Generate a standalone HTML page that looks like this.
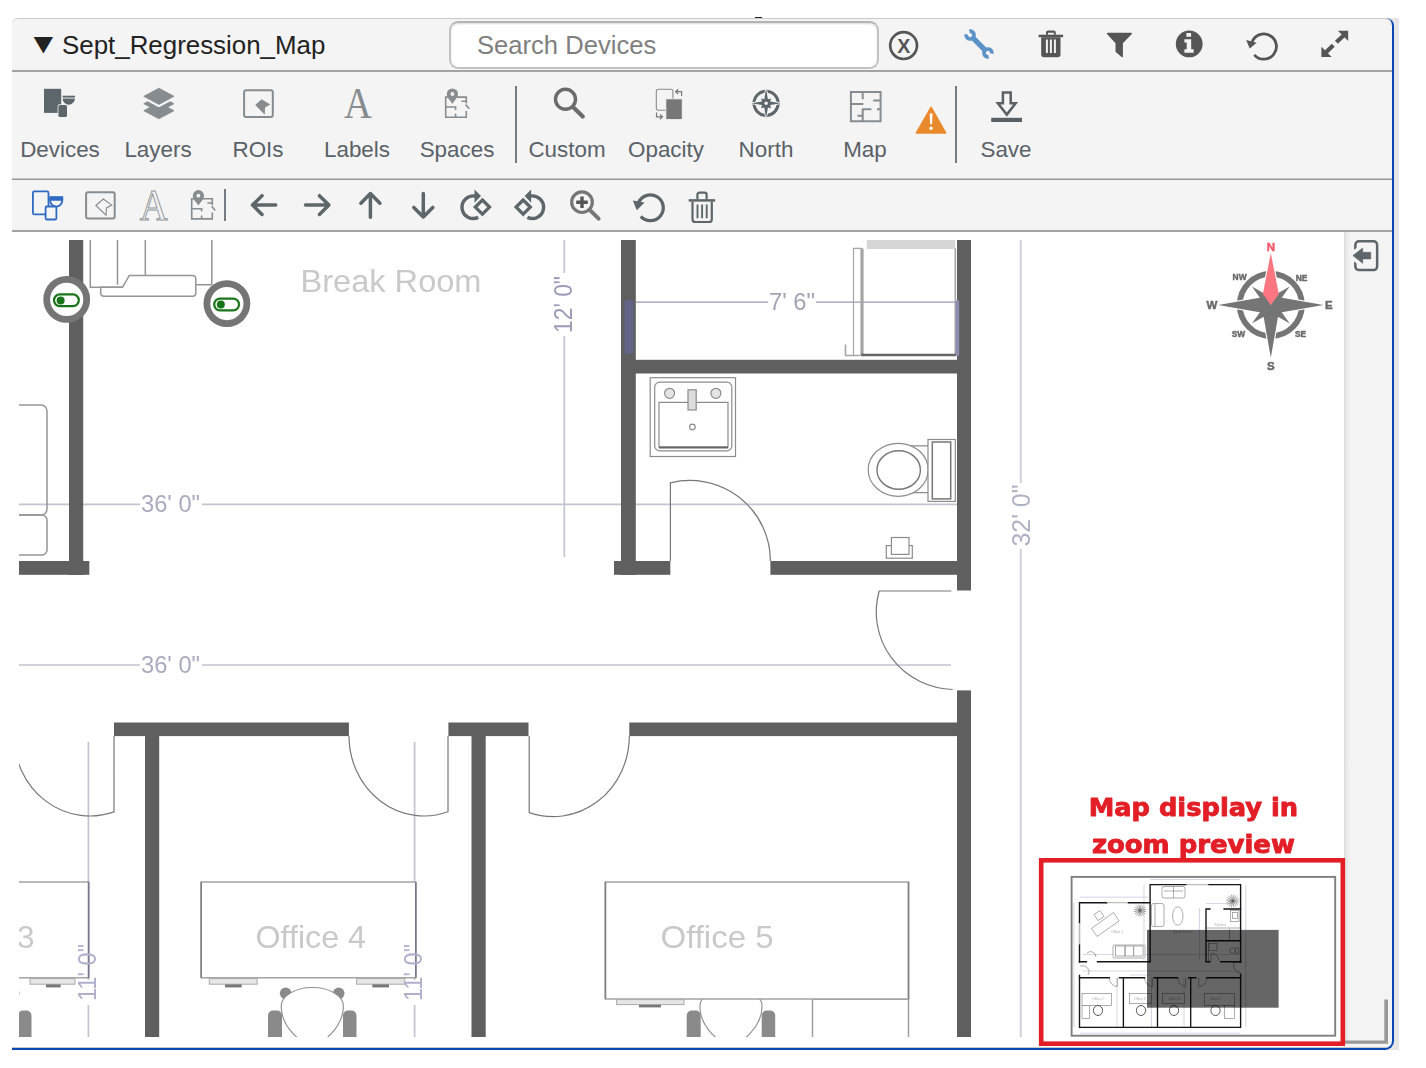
<!DOCTYPE html>
<html lang="en">
<head>
<meta charset="utf-8">
<title>Sept_Regression_Map</title>
<style>
html,body{margin:0;padding:0;background:#fff;}
body{width:1426px;height:1068px;position:relative;overflow:hidden;font-family:"Liberation Sans",Arial,sans-serif;}
.abs{position:absolute;}
#panel{left:12px;top:18px;width:1380px;height:1030px;background:#f4f4f4;border-top:1px solid #c9c9c9;box-sizing:border-box;border-radius:6px 8px 0 0;}
#stripe{left:1384px;top:18px;width:15px;height:1032px;background:#e6e6e6;}
#blueR{left:1384px;top:18px;width:10px;height:1032px;box-sizing:border-box;border-right:2px solid #0a47b3;border-bottom:2px solid #0a47b3;border-radius:0 8px 9px 0;}
#blueB{left:12px;top:1047px;width:1374px;height:3px;box-sizing:border-box;border-top:1px solid #c8c8c8;background:#0a47b3;}
.sep{left:12px;width:1380px;height:2px;background:#a3a3a3;}
#title{left:33px;top:29px;font-size:25.9px;line-height:32px;color:#222;white-space:nowrap;}
#tri{display:inline-block;width:29px;font-size:28px;line-height:30px;vertical-align:top;transform:translateX(-6px) scaleX(1.18);transform-origin:left center;}
#search{left:449px;top:21px;width:430px;height:48px;box-sizing:border-box;border:2px solid #c2c2c2;border-top-color:#b4b4b4;border-radius:9px;background:#fff;box-shadow:inset 0 1px 2px rgba(0,0,0,.14);}
#search span{position:absolute;left:26px;top:6px;font-size:25.6px;line-height:32px;color:#7f7f7f;white-space:nowrap;}
.lbl{top:137px;font-size:22.4px;line-height:26px;color:#5a6268;white-space:nowrap;text-align:center;transform:translateX(-50%);}
.vsep{width:2px;background:#777b7f;}
#mapbg{left:12px;top:232px;width:1332px;height:815px;background:#fff;}
#side{left:1344px;top:232px;width:48px;height:809px;background:linear-gradient(to right,#dadada 0,#e6e6e6 2px,#f0f0f0 5px,#f4f4f4 8px);}
</style>
</head>
<body>
<div id="stripe" class="abs"></div>
<div id="panel" class="abs"></div>
<div id="mapbg" class="abs"></div>
<div id="side" class="abs"></div>
<div id="blueB" class="abs"></div>
<div id="blueR" class="abs"></div>

<div class="abs" style="left:755px;top:17px;width:7px;height:1px;background:#222"></div>
<!-- header -->
<div id="title" class="abs"><span id="tri">&#9660;</span>Sept_Regression_Map</div>
<div id="search" class="abs"><span>Search Devices</span></div>
<div class="abs sep" style="top:70px"></div>

<!-- toolbar 1 -->
<div class="abs lbl" style="left:60px">Devices</div>
<div class="abs lbl" style="left:158px">Layers</div>
<div class="abs lbl" style="left:258px">ROIs</div>
<div class="abs lbl" style="left:357px">Labels</div>
<div class="abs lbl" style="left:457px">Spaces</div>
<div class="abs lbl" style="left:567px">Custom</div>
<div class="abs lbl" style="left:666px">Opacity</div>
<div class="abs lbl" style="left:766px">North</div>
<div class="abs lbl" style="left:865px">Map</div>
<div class="abs lbl" style="left:1006px">Save</div>
<div class="abs vsep" style="left:515px;top:86px;height:77px"></div>
<div class="abs vsep" style="left:955px;top:86px;height:77px"></div>
<div class="abs sep" style="top:178px;background:linear-gradient(#c6c6c6 50%,#969696 50%)"></div>

<!-- toolbar 2 -->
<div class="abs vsep" style="left:224px;top:189px;height:32px"></div>
<div class="abs sep" style="top:230px"></div>

<!-- ICONS -->
<svg class="abs" style="left:0;top:0" width="1426" height="232" viewBox="0 0 1426 232">
<!-- header icons -->
<g fill="none" stroke="#555" stroke-width="2.7">
<circle cx="903.6" cy="45.6" r="13.4"/>
</g>
<text x="903.7" y="52.9" font-family="Liberation Sans, Arial, sans-serif" font-size="19.6" font-weight="bold" fill="#555" text-anchor="middle">X</text>
<!-- wrench -->
<g transform="translate(979 44) rotate(-45) scale(0.84)" fill="none" stroke="#5b92c8">
<path stroke-width="6.2" d="M0,-11.5 V11.5"/>
<path stroke-width="4.4" d="M2.7,-18.9 A4.7,4.7 0 1 1 -2.7,-18.9"/>
<path stroke-width="4.4" d="M-2.7,18.9 A4.7,4.7 0 1 1 2.7,18.9"/>
</g>
<!-- trash filled -->
<g fill="#555">
<path d="M1046,34.7 V32.6 a2.1,2.1 0 0 1 2.1,-2.1 h5.6 a2.1,2.1 0 0 1 2.1,2.1 V34.7 h-2 V32.7 h-5.8 V34.7 Z"/>
<rect x="1038.6" y="34.7" width="24.5" height="2.5"/>
<path fill-rule="evenodd" d="M1041.2,37.2 H1060.5 V54.5 a2.8,2.8 0 0 1 -2.8,2.8 H1044 a2.8,2.8 0 0 1 -2.8,-2.8 Z M1045.9,39.6 h2 v13.4 h-2 Z M1049.9,39.6 h2 v13.4 h-2 Z M1053.9,39.6 h2 v13.4 h-2 Z"/>
</g>
<!-- filter -->
<path fill="#555" d="M1107.6,32.7 H1131.2 a0.8,0.8 0 0 1 .6,1.3 L1122.9,43.3 V56.5 a0.8,0.8 0 0 1 -1.3,.6 L1115.5,51.8 V43.3 L1107,34 a0.8,0.8 0 0 1 .6,-1.3 Z"/>
<!-- info -->
<circle cx="1189.2" cy="43.9" r="13.4" fill="#555"/>
<path fill="#f4f4f4" d="M1186.4,33.1 h4.7 v3.7 h-4.7 Z M1184.4,39.3 h6.8 v10 h2.5 v3.4 h-9.3 v-3.4 h2.3 v-6.8 h-2.3 Z"/>
<!-- refresh -->
<g>
<path fill="none" stroke="#555" stroke-width="2.8" d="M1252.1,42.0 A12.6,12.6 0 1 1 1254.3,54.8"/>
<path fill="#555" d="M1246.2,40 L1256.7,42.8 L1249.7,48.6 Z"/>
</g>
<!-- expand -->
<g fill="#555" stroke="#555">
<path stroke="none" d="M1348.2,30.7 V40.9 L1337.9,30.7 Z"/>
<path stroke="none" d="M1321.4,57 V46.8 L1331.7,57 Z"/>
<path stroke-width="4.2" fill="none" d="M1343.6,35.4 L1336.4,42.3 M1326,52.3 L1333.3,45.3"/>
</g>

<!-- toolbar 1 icons -->
<!-- devices -->
<g fill="#5d666b">
<rect x="44" y="88.8" width="17.2" height="24.1"/>
<rect x="57.6" y="104.2" width="10.2" height="13.6" rx="2.2" fill="#f4f4f4"/>
<rect x="58.4" y="105" width="8.6" height="12" rx="1.6"/>
<path d="M62.6,95.7 H74.9 V97.6 H62.6 Z"/>
<path d="M62.6,98.4 H74.9 A6.15,6.3 0 0 1 62.6,98.4 Z"/>
</g>
<!-- layers -->
<g fill="#868c8f" stroke-linejoin="round">
<path d="M143.8,110.7 L158.9,102.5 L174,110.7 L158.9,118.8 Z" stroke="#868c8f" stroke-width="0.8"/>
<path d="M143.8,103.7 L158.9,95.5 L174,103.7 L158.9,111.8 Z" stroke="#868c8f" stroke-width="0.8"/>
<path d="M143.8,96.3 L158.9,88.2 L174,96.3 L158.9,104.4 Z" stroke="#f4f4f4" stroke-width="5.2"/>
<path d="M143.8,96.3 L158.9,88.2 L174,96.3 L158.9,104.4 Z" stroke="#868c8f" stroke-width="0.8"/>
</g>
<!-- ROIs -->
<rect x="244.1" y="90.2" width="28.7" height="26.8" rx="2" fill="none" stroke="#868c8f" stroke-width="2"/>
<path fill="#868c8f" d="M255.2,104.9 L261.6,99.3 L270.2,104.5 L265,107.5 L264.8,114.8 Z"/>
<!-- Labels A -->
<text x="0" y="118" transform="translate(357.9 0) scale(0.875 1)" font-family="Liberation Serif, Times New Roman, serif" font-size="44" fill="#868c8f" text-anchor="middle">A</text>
<!-- Spaces -->
<g id="spc" fill="none" stroke="#868c8f" stroke-width="1.6">
<path d="M445.7,96.3 V117.2 H466.3 V110.9 M445,97.1 H467 M466.3,96.3 V103.6 M465.6,104.6 L469.3,108.8 M461.4,101.3 H466.3 M445,107 H455.6 V109.9 M455.6,113.7 V117.9"/>
<path fill="#868c8f" stroke="none" fill-rule="evenodd" d="M452.4,88.4 a5.6,5.6 0 0 1 5.6,5.6 c0,3.6 -3.4,6.2 -5.6,9.9 c-2.2,-3.7 -5.6,-6.3 -5.6,-9.9 a5.6,5.6 0 0 1 5.6,-5.6 Z M452.4,92.1 a1.9,1.9 0 1 0 0,3.8 a1.9,1.9 0 1 0 0,-3.8 Z"/>
</g>
<!-- Custom magnifier -->
<g fill="none" stroke="#6b6b6b">
<circle cx="565.5" cy="99.3" r="10" stroke-width="3.4"/>
<path d="M573.2,107.2 L582.8,116.4" stroke-width="4.2" stroke-linecap="round"/>
</g>
<!-- Opacity -->
<g>
<rect x="656.3" y="89.3" width="16.6" height="21" rx="2.2" fill="none" stroke="#8a8a8a" stroke-width="1.1"/>
<rect x="665.9" y="98.9" width="16.3" height="20.6" fill="#777" stroke="#f4f4f4" stroke-width="0.8"/>
<path fill="none" stroke="#777" stroke-width="1.2" d="M678.2,89.3 L675.6,91.7 L678.2,94.1 M675.8,91.7 H681.6 V95.9"/>
<path fill="none" stroke="#777" stroke-width="1.2" d="M656.5,112.6 V116.8 H662.3 M659.9,114.4 L662.5,116.8 L659.9,119.2"/>
</g>
<!-- North -->
<g>
<circle cx="766.1" cy="103.3" r="12.1" fill="none" stroke="#5d666b" stroke-width="3"/>
<path fill="#f4f4f4" d="M766.1,86 L769.6,99.8 L783.4,103.3 L769.6,106.8 L766.1,120.6 L762.6,106.8 L748.8,103.3 L762.6,99.8 Z"/>
<path fill="#5d666b" d="M766.1,88.4 L767.9,99.2 L771,98.4 L770.2,101.5 L781,103.3 L770.2,105.1 L771,108.2 L767.9,107.4 L766.1,118.2 L764.3,107.4 L761.2,108.2 L762,105.1 L751.2,103.3 L762,101.5 L761.2,98.4 L764.3,99.2 Z"/>
<circle cx="766.1" cy="103.3" r="1.7" fill="#f4f4f4"/>
</g>
<!-- Map -->
<path fill="none" stroke="#868c8f" stroke-width="2" d="M850.9,91.9 H880.6 V121.2 H850.9 Z M862.7,91.9 V99.3 M873.2,100.5 H880.6 M850.9,103.9 H863.4 M862.7,109.3 H871.4 M877,109.3 H880.6 M862.7,108.5 V121.2 M857.5,115.8 H862.7"/>
<!-- warning -->
<path fill="#e8892b" stroke="#e8892b" stroke-width="1.6" stroke-linejoin="round" d="M931.1,107.4 L945.6,132.9 H916.4 Z"/>
<path fill="#fff" d="M929.6,113.4 h3 l-0.6,10.8 h-1.8 Z"/>
<circle cx="931.1" cy="128.2" r="1.7" fill="#fff"/>
<!-- Save -->
<path fill="none" stroke="#5a6166" stroke-width="2.5" d="M1002.9,92.4 H1010.7 V103.3 H1015.6 L1006.8,114.6 L997.9,103.3 H1002.9 Z"/>
<rect x="991.2" y="117.8" width="30.8" height="4.2" fill="#5a6166"/>

<!-- toolbar 2 icons -->
<g fill="#f4f4f4" stroke="#2f6bc2" stroke-width="1.8">
<rect x="32.9" y="191.4" width="15.6" height="23" rx="1.5"/>
<path d="M50,199.8 H62.4 A6.2,6.8 0 0 1 50,199.8 Z"/><rect x="49.3" y="196.2" width="13.9" height="2.9" fill="#2f6bc2" stroke="none"/>
<rect x="45.6" y="206.5" width="10.8" height="13" rx="1.2"/>
</g>
<rect x="86.1" y="192.3" width="28.6" height="26.2" rx="2" fill="none" stroke="#868c8f" stroke-width="2"/>
<path fill="none" stroke="#868c8f" stroke-width="1.1" d="M95.9,205.5 L103.3,199 L111.8,205.1 L106.4,207.9 L106.1,215.2 Z"/>
<text x="0" y="220.1" transform="translate(153.6 0) scale(0.89 1)" font-family="Liberation Serif, Times New Roman, serif" font-size="43.5" fill="#f4f4f4" stroke="#8f9598" stroke-width="1" text-anchor="middle">A</text>
<use href="#spc" transform="translate(-254 101.7)"/>
<!-- arrows -->
<g fill="none" stroke="#5d666b" stroke-width="3.5" stroke-linecap="round" stroke-linejoin="round">
<path d="M275.7,205.1 H252.6 M262,195.7 L252.5,205.1 L262,214.5"/>
<path d="M305.5,205.1 H328.8 M319.4,195.7 L328.9,205.1 L319.4,214.5"/>
<path d="M370.4,217.2 V193.7 M360.9,203.2 L370.4,193.6 L379.9,203.2"/>
<path d="M423.3,193.4 V216.9 M413.8,207.4 L423.3,217 L432.8,207.4"/>
</g>
<!-- rotate right -->
<g fill="none" stroke="#5d666b">
<path stroke-width="3.4" d="M475.4,196.1 A11.3,11.3 0 1 0 478.2,217.4"/>
<path fill="#5d666b" stroke="none" d="M474.5,189.4 L481,196.1 L474.5,202.8 Z"/>
<path stroke-width="3.3" d="M482.4,200 L489.5,207.1 L482.4,214.2 L475.3,207.1 Z"/>
</g>
<g fill="none" stroke="#5d666b">
<path stroke-width="3.4" d="M530.2,196.1 A11.3,11.3 0 1 1 527.4,217.4"/>
<path fill="#5d666b" stroke="none" d="M531.1,189.4 L524.6,196.1 L531.1,202.8 Z"/>
<path stroke-width="3.3" d="M523.2,200 L516.1,207.1 L523.2,214.2 L530.3,207.1 Z"/>
</g>
<!-- zoom in -->
<g fill="none">
<circle cx="582" cy="202.2" r="10.3" stroke="#767676" stroke-width="3.2"/>
<path d="M590.2,210.4 L598.6,218.7" stroke="#767676" stroke-width="4" stroke-linecap="round"/>
<path d="M576.2,202.2 H587.8 M582,196.4 V208" stroke="#555" stroke-width="3.4"/>
</g>
<!-- refresh 2 -->
<path fill="none" stroke="#5d666b" stroke-width="3.3" d="M638.4,203 A12.9,12.9 0 1 1 640.8,216.4"/>
<path fill="#5d666b" d="M632.8,200.6 L644.6,202.6 L636.8,210.2 Z"/>
<!-- trash outline -->
<g fill="none" stroke="#5d666b" stroke-width="2.2">
<path d="M697.4,199.3 V194.6 a1.9,1.9 0 0 1 1.9,-1.9 h5.4 a1.9,1.9 0 0 1 1.9,1.9 V199.3"/>
<path d="M688.7,200.4 H715.2" stroke-width="2.5"/>
<path d="M692.5,201.6 V219.2 a2.8,2.8 0 0 0 2.8,2.8 H709 a2.8,2.8 0 0 0 2.8,-2.8 V201.6"/>
<path d="M697.5,204.4 V218.3 M702.1,204.4 V218.3 M706.7,204.4 V218.3" stroke-width="1.9"/>
</g>
</svg>

<!-- MAP -->
<svg class="abs" style="left:19px;top:240px" width="1325" height="797" viewBox="19 240 1325 797" font-family="Liberation Sans, Arial, sans-serif">
<defs><filter id="bl" x="-2%" y="-2%" width="104%" height="104%"><feGaussianBlur stdDeviation="0.7"/></filter></defs>
<g filter="url(#bl)">
<!-- dimension lines -->
<g stroke="#c4c4d0" stroke-width="1.7" fill="none">
<path d="M19,504.3 H140 M202,504.3 H957"/>
<path d="M19,665 H140 M202,665 H951"/>
<path d="M564.3,240 V273 M564.3,336 V557"/>
<path d="M1020.8,240 V483 M1020.8,549 V1037" stroke-width="2" stroke="#d0d0dc"/>
<path d="M88.4,742 V980 M88.4,1005 V1037 M414.6,742 V980 M414.6,1005 V1037"/>
</g>
<path d="M636,302.2 H768 M816,302.2 H957" stroke="#9a9ab4" stroke-width="1.3" fill="none"/>
<!-- sofa top-left -->
<g stroke="#959595" stroke-width="1.5" fill="none">
<path d="M90.3,240 V287.2 H122.6 M117.5,240 V284.7 M145.3,240 V275.5 M211.8,240 V284.7 H196"/>
<path fill="#fff" d="M100.7,287.2 V293 Q100.7,296.2 104,296.2 H192.5 Q195.8,296.2 195.8,293 V279 Q195.8,275.5 192.3,275.5 H129.3 L122.6,287.2 Z"/>
<!-- left furniture -->
<rect x="-10" y="405" width="57" height="110" rx="6"/>
<rect x="-10" y="515" width="57" height="40" rx="5"/>
</g>
<!-- fridge -->
<rect x="866.8" y="240" width="88.5" height="9" fill="#d6d6d6"/>
<g fill="none" stroke="#a5a5a5">
<path d="M853.5,355.5 V248.4 H862" stroke-width="1.2"/>
<path d="M845.5,344.5 V355.5 H860" stroke-width="1.6"/>
<path d="M862,248.4 V355.5" stroke-width="3.2"/>
<path d="M955.3,248.4 V355.5" stroke-width="1.6"/>
<path d="M861,355 H956" stroke="#666" stroke-width="2.4"/>
</g>
<!-- sink -->
<g fill="none" stroke="#8c8c8c" stroke-width="1.2">
<rect x="650.2" y="377.7" width="85.3" height="78.8"/>
<rect x="654.7" y="382.2" width="77.1" height="68.7" rx="5"/>
<path d="M688,402.4 H659 V447 H728 V402.4 H696.2"/>
<path d="M659,447.6 H728" stroke="#666" stroke-width="2"/>
<circle cx="669.6" cy="393.3" r="5" fill="#e4e4e4"/>
<circle cx="715.9" cy="393.3" r="5" fill="#e4e4e4"/>
<rect x="688" y="389.8" width="8.2" height="20.2" fill="#ddd"/>
<circle cx="692.4" cy="426.9" r="2.8"/>
</g>
<!-- toilet -->
<g fill="#fff" stroke="#8c8c8c" stroke-width="1.2">
<path d="M905,445.9 H928 M905,492.6 H928" fill="none"/>
<ellipse cx="898.2" cy="469.8" rx="30" ry="26.5"/>
<ellipse cx="898.7" cy="470" rx="21.7" ry="19.3" stroke="#777" stroke-width="1.4"/>
<rect x="928" y="439.5" width="27.3" height="61.9"/>
<rect x="932.3" y="442" width="18.4" height="56.9" stroke="#777" stroke-width="1.5"/>
<rect x="886.3" y="545.6" width="26" height="12.6"/>
<rect x="891.4" y="537.5" width="17.6" height="16.9"/>
</g>
<!-- doors -->
<g fill="none" stroke="#777" stroke-width="1.2">
<path d="M670.4,561 V482.9 A80.4,80.5 0 0 1 770.4,561"/>
<path d="M951.4,591 H879.2 A78.7,77.5 0 0 0 952.7,689.5"/>
<path d="M114,736 V811.9 A76,80 0 0 1 14,736"/>
<path d="M448,736 V811.8 A75,80 0 0 1 349,736"/>
<path d="M529.2,736 V812.6 A76.3,80.6 0 0 0 629.3,736"/>
</g>
<!-- chairs -->
<g id="chair">
<rect x="268" y="1010.5" width="14" height="40" rx="5" fill="#8a8a8a"/>
<rect x="343" y="1010.5" width="13.5" height="40" rx="5" fill="#8a8a8a"/>
<circle cx="285.6" cy="993.3" r="5.8" fill="#8a8a8a"/>
<circle cx="338.7" cy="993.3" r="5.8" fill="#8a8a8a"/>
<path d="M312.3,987.5 C330,987.5 343.4,996 343.4,1006 C343.4,1020 335,1032 322,1042 H302.6 C289,1032 281.2,1020 281.2,1006 C281.2,996 295,987.5 312.3,987.5 Z" fill="#fff" stroke="#8c8c8c" stroke-width="1.1"/>
</g>
<use href="#chair" x="418.7"/>
<use href="#chair" x="-325"/>
<!-- desks -->
<g fill="#fff" stroke="#9c9c9c" stroke-width="1.4">
<rect x="812.5" y="999" width="96" height="50"/>
<rect x="-60" y="882" width="148.6" height="95.8"/>
<rect x="201.2" y="882" width="214.6" height="95.8"/>
<rect x="605.4" y="882" width="303.1" height="117"/>
</g>
<path d="M88.6,882 V977.8 M415.8,882 V977.8" stroke="#77778f" stroke-width="1.6"/>
<path d="M201.2,882 V977.8 M605.4,882 V999 M908.5,882 V999" stroke="#808080" stroke-width="1.6"/>
<g fill="#e6e6e6" stroke="#aaa" stroke-width="1">
<rect x="30" y="978.6" width="45" height="5.6"/>
<rect x="209.3" y="978.6" width="47.8" height="5.6"/>
<rect x="356.6" y="978.6" width="48.2" height="5.6"/>
<rect x="616.6" y="999.6" width="67.4" height="5"/>
</g>
<g fill="#777">
<rect x="46" y="984.4" width="14.7" height="3"/>
<rect x="225" y="984.4" width="16.7" height="3"/>
<rect x="372.3" y="984.4" width="16.7" height="3"/>
<rect x="639" y="1004.8" width="22" height="2.6"/>
</g>
<!-- room labels -->
<g fill="#c9c9c9" font-size="31.5">
<text x="300.5" y="292" textLength="181" lengthAdjust="spacingAndGlyphs">Break Room</text>
<text x="255.5" y="948" textLength="110.5" lengthAdjust="spacingAndGlyphs">Office 4</text>
<text x="660.5" y="947.5" textLength="113" lengthAdjust="spacingAndGlyphs">Office 5</text>
<text x="34.5" y="948" text-anchor="end">Office 3</text>
</g>
<g fill="#ababc0" font-size="24">
<text x="141" y="512" textLength="59" lengthAdjust="spacingAndGlyphs">36' 0"</text>
<text x="141" y="673" textLength="59" lengthAdjust="spacingAndGlyphs">36' 0"</text>
<text x="769" y="310.3" fill="#a4a4b6" textLength="46" lengthAdjust="spacingAndGlyphs">7' 6"</text>
<text transform="translate(572 333) rotate(-90)" font-size="25.5" fill="#9c9cb8" textLength="57" lengthAdjust="spacingAndGlyphs">12' 0"</text>
<text transform="translate(1029.5 546.5) rotate(-90)" font-size="25.5" fill="#b0b0c4" textLength="62" lengthAdjust="spacingAndGlyphs">32' 0"</text>
<text transform="translate(96 1001) rotate(-90)" font-size="26" fill="#b0b0cc" textLength="57" lengthAdjust="spacingAndGlyphs">11' 0"</text>
<text transform="translate(422 1001) rotate(-90)" font-size="26" fill="#b0b0cc" textLength="57" lengthAdjust="spacingAndGlyphs">11' 0"</text>
</g>
<!-- walls -->
<g fill="#5e5e5e">
<rect x="69" y="240" width="14.2" height="335"/>
<rect x="19" y="561" width="70.3" height="13.8"/>
<rect x="621" y="240" width="14.8" height="335"/>
<rect x="614" y="561" width="56.3" height="13.8"/>
<rect x="635" y="359.8" width="336" height="13.7"/>
<rect x="770.4" y="561" width="200.6" height="13.8"/>
<rect x="957" y="240" width="14" height="350.5"/>
<rect x="957" y="690.4" width="14" height="347"/>
<rect x="114" y="722.5" width="234.9" height="13.6"/>
<rect x="145" y="735" width="14.2" height="303"/>
<rect x="448.4" y="722.5" width="80.1" height="13.6"/>
<rect x="471.5" y="735" width="14.2" height="303"/>
<rect x="629.3" y="722.5" width="328" height="13.6"/>
<rect x="624.5" y="300" width="9" height="54" rx="2" fill="#636388"/>
<rect x="955.8" y="300" width="3.4" height="56" rx="1.5" fill="#8c8cb2"/>
</g>
</g>
</svg>

<!-- OVERLAYS -->
<svg class="abs" style="left:0;top:232px" width="1426" height="836" viewBox="0 232 1426 836" font-family="Liberation Sans, Arial, sans-serif">
<!-- device markers -->
<g id="mk">
<circle cx="66.7" cy="299.4" r="20" fill="#fff" stroke="#757575" stroke-width="6.8"/>
<rect x="54" y="294.4" width="24.8" height="11.8" rx="5.9" fill="#fff" stroke="#187418" stroke-width="2.2"/>
<circle cx="60.6" cy="300.4" r="4" fill="#187418"/>
</g>
<use href="#mk" x="160.2" y="4.2"/>
<!-- compass rose -->
<g>
<circle cx="1270.8" cy="305" r="31.1" fill="none" stroke="#757575" stroke-width="5.8"/>
<g fill="#757575" stroke="#fff" stroke-width="2.2" stroke-linejoin="miter">
<path d="M1218.2,305 L1262.5,297.2 L1270.8,305 L1262.5,312.8 Z"/>
<path d="M1323.5,305 L1279.1,297.2 L1270.8,305 L1279.1,312.8 Z"/>
<path d="M1270.8,357.7 L1263,313.3 L1270.8,305 L1278.6,313.3 Z"/>
<path fill="#fb7681" d="M1270.8,253 L1278.8,294 L1270.8,305 L1262.9,294 Z"/>
</g>
<g fill="#757575">
<path d="M1251.9,286.5 L1260.6,298.7 L1270.8,305 L1264.2,293.6 Z"/>
<path d="M1251.9,323.5 L1260.6,311.3 L1270.8,305 L1264.2,316.4 Z"/>
<path d="M1289.7,286.5 L1281.0,298.7 L1270.8,305 L1277.4,293.6 Z"/>
<path d="M1289.7,323.5 L1281.0,311.3 L1270.8,305 L1277.4,316.4 Z"/>
<path d="M1218.2,305 L1262.5,297.2 L1270.8,305 L1262.5,312.8 Z"/>
<path d="M1323.5,305 L1279.1,297.2 L1270.8,305 L1279.1,312.8 Z"/>
<path d="M1270.8,357.7 L1263,313.3 L1270.8,305 L1278.6,313.3 Z"/>
<path d="M1262.5,296.6 L1270.8,305 L1279.1,296.6 L1279.1,313.4 L1262.5,313.4 Z"/>
</g>
<path fill="#fb7681" d="M1270.8,253 L1278.8,294 L1270.8,305 L1262.9,294 Z"/>
<g font-weight="bold" text-anchor="middle" fill="#686868" stroke="#686868" stroke-width="0.45">
<text x="1270.8" y="250.6" font-size="11.5" fill="#f6596a" stroke="#f6596a">N</text>
<text x="1270.8" y="369.5" font-size="11.5">S</text>
<text x="1212" y="309.4" font-size="11.5">W</text>
<text x="1328.8" y="309.4" font-size="11.5">E</text>
<text x="1239.6" y="279.8" font-size="8.4">NW</text>
<text x="1301.5" y="280.7" font-size="8.4">NE</text>
<text x="1238.5" y="337" font-size="8.4">SW</text>
<text x="1300.5" y="337" font-size="8.4">SE</text>
</g>
</g>
<!-- collapse icon -->
<defs><clipPath id="cpc"><rect x="1353.5" y="243" width="20" height="25.4"/></clipPath></defs>
<g>
<rect x="1355.35" y="241.3" width="21.8" height="28.8" rx="3.6" fill="none" stroke="#5d666b" stroke-width="2.5"/>
<path fill="#5d666b" stroke="#f4f4f4" stroke-width="7.4" stroke-linejoin="round" clip-path="url(#cpc)" d="M1352.9,255.6 L1362.7,247.9 V252.3 H1370.8 V258.9 H1362.7 V263.3 Z"/>
<path fill="#5d666b" stroke="#5d666b" stroke-width="0.6" stroke-linejoin="round" d="M1352.9,255.6 L1362.7,247.9 V252.3 H1370.8 V258.9 H1362.7 V263.3 Z"/>
</g>
<!-- resize handle -->
<path fill="#999" d="M1384.3,999.4 H1388 V1043.8 H1345 V1040.4 H1384.3 Z"/>
<!-- annotation -->
<g font-family="DejaVu Sans, Liberation Sans, sans-serif" font-weight="bold" font-size="25.4" fill="#e31e26" stroke="#e31e26" stroke-width="0.9" stroke-linejoin="round" text-anchor="middle">
<text x="1193.4" y="816.3" textLength="209.5" lengthAdjust="spacingAndGlyphs">Map display in</text>
<text x="1193.4" y="852.8" textLength="203" lengthAdjust="spacingAndGlyphs">zoom preview</text>
</g>
<rect x="1041.2" y="860.3" width="301.6" height="183.4" fill="#fff" stroke="#e31e26" stroke-width="4.6"/>
<defs><filter id="bl2" x="-2%" y="-2%" width="104%" height="104%"><feGaussianBlur stdDeviation="0.35"/></filter></defs>
<g id="minimap">
<rect x="1071.6" y="876.9" width="263.6" height="158.8" fill="#fff" stroke="#7f7f7f" stroke-width="1.9"/>
<g filter="url(#bl2)">
<!-- dims -->
<g stroke="#c4c4d6" stroke-width="0.7" fill="none">
<path d="M1080,897.2 H1148 M1073.9,903 V1027 M1080,1033.2 H1240 M1150,879.5 H1240 M1245.8,885 V1027 M1144,885 V961 M1130,975 H1150 M1083,954.5 H1240 M1083,971 H1240 M1117,978 V1027 M1151.5,978 V1027 M1184,978 V1027 M1199.5,908 V960 M1206,903.5 H1232"/>
</g>
<!-- furniture -->
<g stroke="#8a8a8a" stroke-width="0.7" fill="#fff">
<path d="M1091.5,928.5 L1113.5,912.5 L1119,921 L1097,936.5 Z"/>
<path d="M1094,914.5 L1100,910.5 L1104,916.5 L1098,920.5 Z"/>
<rect x="1113" y="945" width="32" height="13" rx="1.5"/>
<rect x="1115.5" y="946" width="9.3" height="10"/><rect x="1125.3" y="946" width="8" height="10"/><rect x="1133.8" y="946" width="9.3" height="10"/>
<path d="M1087,953 a5.5,6 0 0 1 9,4" fill="none"/>
<path d="M1080,966 a7,6 0 0 1 8,9" fill="none"/>
<rect x="1162" y="886.5" width="23" height="11.5" rx="2"/><path d="M1173.5,886.5 V898 M1164,891 H1183" fill="none"/>
<rect x="1151.5" y="903.5" width="12.5" height="23" rx="2"/><path d="M1155,903.5 V926.5" fill="none"/>
<ellipse cx="1177.8" cy="916" rx="5.2" ry="9.2"/>
<rect x="1230.5" y="910.5" width="8.5" height="11"/><rect x="1232.5" y="912.5" width="5" height="6"/>
<path d="M1206,928 H1240 M1229.5,929 V940 M1208.5,941 V961" fill="none"/>
<rect x="1209" y="943.5" width="8" height="7"/>
<ellipse cx="1232.5" cy="950.5" rx="2.8" ry="2.6"/><rect x="1235.5" y="948" width="3" height="5.5"/>
<path d="M1211,961 V953.5 a7,6 0 0 1 7.5,7" fill="none"/>
<path d="M1240.5,962.5 H1233.5 a7,9 0 0 0 7,10.5" fill="none"/>
<path d="M1109.3,978 a8,8.5 0 0 0 8,8.5 V978" fill="none"/>
<path d="M1144.6,978 a8,8.5 0 0 0 8,8.5 V978" fill="none"/>
<path d="M1177.7,978 a8,8.5 0 0 0 8,8.5 V978" fill="none"/>
<path d="M1206.8,978 a8,8.5 0 0 1 -8,8.5 V978" fill="none"/>
<rect x="1082" y="993.5" width="29.5" height="12"/><rect x="1082" y="1005.5" width="7.5" height="13"/>
<rect x="1129.5" y="993.5" width="22" height="10"/>
<rect x="1162.5" y="993.5" width="22" height="10"/>
<rect x="1204.5" y="993.5" width="30" height="12"/><rect x="1224.5" y="1005.5" width="10" height="13"/>
</g>
<g stroke="#444" stroke-width="0.9" fill="#fff">
<ellipse cx="1098" cy="1010.5" rx="4.6" ry="5"/><ellipse cx="1141" cy="1010.5" rx="4.6" ry="5"/><ellipse cx="1174" cy="1010.5" rx="4.6" ry="5"/><ellipse cx="1215.5" cy="1010.5" rx="4.6" ry="5"/>
</g>
<g stroke="#555" stroke-width="0.55" fill="none">
<path d="M1134.1,909.3 L1145.9,911.7 M1135.0,907.1 L1145.0,913.9 M1136.7,905.5 L1143.3,915.5 M1138.9,904.6 L1141.1,916.4 M1141.2,904.6 L1138.8,916.4 M1143.4,905.5 L1136.6,915.5 M1145.0,907.2 L1135.0,913.8 M1145.9,909.4 L1134.1,911.6"/>
<path d="M1226.3,899.7 L1239.1,902.3 M1227.3,897.4 L1238.1,904.6 M1229.1,895.6 L1236.3,906.4 M1231.5,894.6 L1233.9,907.4 M1234.0,894.6 L1231.4,907.4 M1236.3,895.6 L1229.1,906.4 M1238.1,897.4 L1227.3,904.6 M1239.1,899.8 L1226.3,902.2"/>
</g>
<g fill="#aaa" font-size="3.4">
<text x="1111.5" y="933">Office 1</text><text x="1214.5" y="925.5">Kitchen</text><text x="1173" y="933">Break Room</text>
<text x="1092" y="1000">Office 2</text><text x="1134" y="1000">Office 3</text><text x="1168" y="1000">Office 4</text><text x="1209.5" y="1000">Office 5</text>
</g>
<!-- walls -->
<g stroke="#151515" stroke-width="1.35" fill="none" stroke-linecap="square">
<path d="M1106.9,902.7 H1079.5 V923.1 M1079.5,944.4 V962 M1128.1,902.7 H1150"/>
<path d="M1079.5,961.7 H1086.4 M1097.5,961.7 H1150.1"/>
<path d="M1150.1,961.7 V884.6 H1186.3 M1208.3,884.6 H1240.6 V962.4 M1240.6,974.2 V1027.4 H1079.5 V975.5"/>
<path d="M1209.9,909 H1206 V961.7 H1209.9 M1224.1,909 H1240.6 M1206,940.7 H1240.6 M1220.9,961.7 H1240.6"/>
<path d="M1079.5,977.7 H1109.3 M1119.5,977.7 H1144.6 M1154.1,977.7 H1177.7 M1188.7,977.7 H1195.8 M1206.8,977.7 H1240.6"/>
<path d="M1123.4,977.7 V1027.4 M1157.5,977.7 V1027.4 M1190.7,977.7 V1027.4"/>
</g>
<path d="M1106.9,902.7 H1128.1 M1186.3,884.6 H1208.3" stroke="#bbb" stroke-width="1.3"/>
<path d="M1079.5,923.1 V944.4" stroke="#bbb" stroke-width="1.6"/>
</g>
<rect x="1147" y="929.9" width="131.6" height="77.8" fill="#000" fill-opacity="0.6"/>
</g>

</svg>

</body>
</html>
